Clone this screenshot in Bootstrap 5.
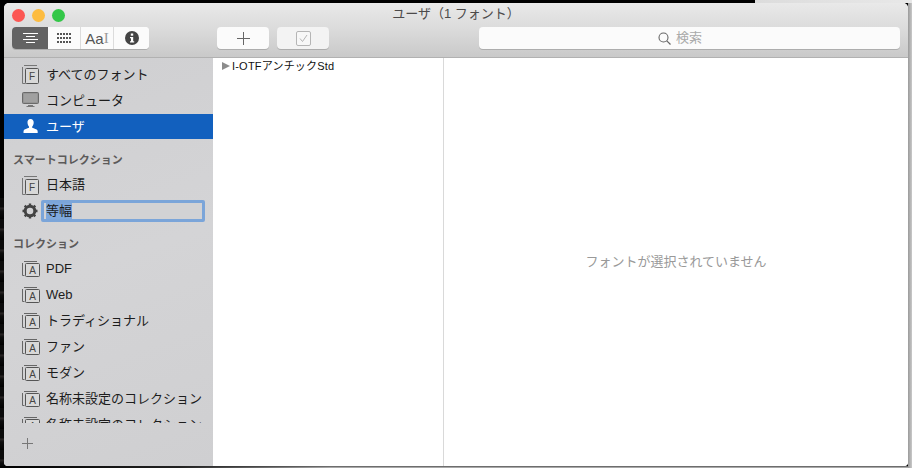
<!DOCTYPE html>
<html lang="ja">
<head>
<meta charset="utf-8">
<title>Font Book</title>
<link href="https://cdn.jsdelivr.net/npm/bootstrap@5.3.0/dist/css/bootstrap.min.css" rel="stylesheet">
<style>
html,body{height:100%;overflow:hidden;background:#000;}
body{font-family:"Liberation Sans","Noto Sans CJK JP",sans-serif;font-size:13px;color:#222;}
.desk{height:468px;padding:3px 4px 2px 4px;
 background:
  linear-gradient(90deg,#000 0,#000 755px,#dcdcdc 755px,#e8e8e8 100%) top/100% 3px no-repeat,
  linear-gradient(90deg,#9a9a9a,#c9c9c9) right/4px 100% no-repeat,
  linear-gradient(90deg,#000 0,#222 180px,rgba(0,0,0,0) 330px) bottom/100% 2px no-repeat,
  linear-gradient(180deg,#6d6d6d 0,#6d6d6d 1px,#a8a8a8 1px,#a8a8a8 100%) bottom/100% 2px no-repeat,
  repeating-linear-gradient(180deg,#0a0a0a 0,#0a0a0a 9px,#2a2626 10px,#0c0c0c 13px,#000 21px) left bottom/4px 270px no-repeat,
  #000;}
.win{height:100%;border-radius:5px 5px 4px 4px;overflow:hidden;background:#fff;}
.tbar{height:55px;flex:none;background:linear-gradient(180deg,#e9e9e9 0,#dcdcdc 45%,#c9c9c9 100%);border-bottom:1px solid #b1b1b1;}
.tit-row{height:24px;}
.lights{width:80px;padding-left:8px;gap:7px;}
.dot{width:13px;height:13px;border-radius:50%;display:block;}
.dot-r{background:#fc5753;}
.dot-y{background:#fdbc40;}
.dot-g{background:#33c748;}
.tit{font-size:13px;color:#4c4a4a;line-height:24px;padding-bottom:2px;}
.ctl-row{height:22px;padding:0 8px;}
.seg-box{width:137px;height:22px;border-radius:4px;background:#fbfbfb;box-shadow:0 1px 0 #adadad;overflow:hidden;}
.tb-btn.btn{padding:0;border:0;border-radius:0;height:22px;background:#fbfbfb;display:flex;align-items:center;justify-content:center;}
.seg1.btn{width:36px;background:#636363;}
.seg2.btn{width:32px;}
.seg3.btn{width:33px;border-left:1px solid #dcdcdc;font-family:"Liberation Sans",sans-serif;font-size:15px;font-weight:400;color:#555;line-height:1;}
.seg3 i{font-style:normal;font-weight:400;font-family:"Liberation Serif",serif;color:#999;font-size:15px;}
.seg4.btn{width:36px;border-left:1px solid #dcdcdc;}
.act.btn{width:52px;border-radius:4px;box-shadow:0 1px 0 #adadad;}
.act1{margin-left:68px;}
.act2{margin-left:8px;margin-right:150px;}
.act2.btn{background:#f3f3f3;}
.srch{height:22px;border-radius:4px;background:#fbfbfb;box-shadow:0 1px 0 #adadad;padding-right:19px;color:#aaa;font-size:13px;gap:5px;}
.side{width:209px;flex:none;background:linear-gradient(160deg,#cfcfd1,#d4d4d6 50%,#cfcfd1);}
.side-list{flex:1 1 auto;min-height:0;padding-top:3px;overflow:hidden;}
.rw{height:26px;flex:none;padding-left:18px;gap:6px;color:#1d1d1d;white-space:nowrap;line-height:26px;}
.rw svg{flex:none;}
.rw>span{padding-top:2px;}
.hd1~.rw>span{padding-top:0;}
.rw-sel{background:#1260be;color:#fff;height:25.5px;margin-top:.5px;}
.hd{flex:none;font-size:11px;font-weight:700;color:#5c5a5a;padding-left:9px;white-space:nowrap;}
.hd1{height:33px;line-height:42px;}
.hd2{height:32px;line-height:40px;}
.fld{margin-left:-3px;width:164px;height:22px;border:3px solid #7ba5d9;border-radius:2px;background:#d2d2d4;padding-left:2px;line-height:15px;}
.fld span{display:block;background:#7fa8dc;color:#1b1b1b;height:16px;padding:0;line-height:16px;width:26px;}
.side-foot{height:43px;flex:none;padding-left:18px;padding-bottom:3px;}
.list-pane{width:231px;flex:none;border-right:1px solid #d9d9d9;background:#fff;padding:0 0 0 9px;font-size:11px;letter-spacing:.2px;color:#111;}
.fam{height:16px;line-height:16px;gap:2px;}
.tri{width:0;height:0;border-left:8px solid #8c8c8c;border-top:4.5px solid transparent;border-bottom:4.5px solid transparent;}
.det{background:#fff;color:#999;font-size:13px;}
</style>
</head>
<body class="m-0">
<svg width="0" height="0" class="position-absolute">
<defs>
<g id="ic-stack"><path d="M2 .5h13M.5 2v16.5h3" fill="none" stroke="#777"/><rect x="3.5" y="3.5" width="13" height="15" rx="1" fill="#d8d8d8" stroke="#555"/></g>
<g id="ic-stack2"><path d="M2 .5h13M.5 2v12.5h2" fill="none" stroke="#666"/><rect x="3.5" y="2.5" width="14" height="13" rx="1" fill="#d8d8d8" stroke="#555"/></g>
</defs>
</svg>
<div class="desk">
<div class="win d-flex flex-column">
 <header class="tbar">
  <div class="tit-row d-flex align-items-center">
   <div class="lights d-flex align-items-center"><span class="dot dot-r"></span><span class="dot dot-y"></span><span class="dot dot-g"></span></div>
   <div class="tit flex-grow-1 text-center">ユーザ（1 フォント）</div>
   <div class="lights"></div>
  </div>
  <div class="ctl-row d-flex align-items-stretch">
   <div class="seg-box d-flex flex-none">
    <button class="btn tb-btn seg1" type="button" aria-label="list"><svg width="15" height="10" viewBox="0 0 15 10"><path d="M0 .5h15M3 3.500h9M0 6.500h15M3 9.500h9" stroke="#fff" fill="none"/></svg></button>
    <button class="btn tb-btn seg2" type="button" aria-label="grid"><svg width="14" height="10" viewBox="0 0 14 10" fill="#555"><rect x="0" y="0" width="2" height="2"/><rect x="3" y="0" width="2" height="2"/><rect x="6" y="0" width="2" height="2"/><rect x="9" y="0" width="2" height="2"/><rect x="12" y="0" width="2" height="2"/><rect x="0" y="4" width="2" height="2"/><rect x="3" y="4" width="2" height="2"/><rect x="6" y="4" width="2" height="2"/><rect x="9" y="4" width="2" height="2"/><rect x="12" y="4" width="2" height="2"/><rect x="0" y="8" width="2" height="2"/><rect x="3" y="8" width="2" height="2"/><rect x="6" y="8" width="2" height="2"/><rect x="9" y="8" width="2" height="2"/><rect x="12" y="8" width="2" height="2"/></svg></button>
    <button class="btn tb-btn seg3" type="button">Aa<i>I</i></button>
    <button class="btn tb-btn seg4" type="button" aria-label="info"><svg width="14" height="14" viewBox="0 0 14 14"><circle cx="7" cy="7" r="7" fill="#444"/><rect x="5.800" y="2.500" width="2.400" height="2.200" fill="#fff"/><path d="M5 6h3.200v4.200H9.200v1.300H5v-1.300h1V7.300H5z" fill="#fff"/></svg></button>
   </div>
   <button class="btn tb-btn act act1" type="button" aria-label="add"><svg width="13" height="13" viewBox="0 0 13 13"><path d="M6.500 0v13M0 6.500h13" stroke="#666" fill="none"/></svg></button>
   <button class="btn tb-btn act act2" type="button" aria-label="check"><svg width="15" height="15" viewBox="0 0 15 15"><rect x=".5" y=".5" width="14" height="14" rx="1.500" fill="#f7f7f7" stroke="#b5b5b5"/><path d="M4 7.500l2.500 3L11 4" stroke="#b5b5b5" fill="none"/></svg></button>
   <div class="srch flex-grow-1 d-flex align-items-center justify-content-center"><svg width="13" height="13" viewBox="0 0 13 13"><circle cx="5.500" cy="5.500" r="4.500" fill="none" stroke="#666" stroke-width="1.100"/><path d="M8.800 8.800l3.700 3.700" stroke="#666" stroke-width="1.200"/></svg><span>検索</span></div>
  </div>
 </header>
 <div class="d-flex flex-grow-1" style="min-height:0">
  <aside class="side d-flex flex-column">
   <div class="side-list d-flex flex-column">
    <div class="rw d-flex align-items-center"><svg width="18" height="19" viewBox="0 0 18 19"><use href="#ic-stack"/><text x="10" y="15" font-size="10" text-anchor="middle" fill="#444" font-family="Liberation Sans">F</text></svg><span>すべてのフォント</span></div>
    <div class="rw d-flex align-items-center"><svg width="18" height="16" viewBox="0 0 18 16"><rect x=".5" y=".5" width="16" height="11" rx="1" fill="#8a8a8a" stroke="#6a6a6a"/><rect x="1.500" y="1.500" width="14" height="9" fill="#a0a0a0"/><path d="M6 13.500h5M4.500 14.500h8" stroke="#777"/></svg><span>コンピュータ</span></div>
    <div class="rw rw-sel d-flex align-items-center"><svg width="18" height="14" viewBox="0 0 18 14"><path d="M8.500 0c2.300 0 3.300 1.800 3.200 3.700-.1 1.600-.8 3.100-1.500 3.800v1.300c1.700.8 4.800 1.300 5.300 2.700.2.600.2 1.500.2 2.500H1.500c0-1 0-1.900.2-2.500.5-1.400 3.600-1.900 5.300-2.700V7.500c-.7-.7-1.400-2.200-1.500-3.800C5.400 1.800 6.200 0 8.500 0z" fill="#fff"/></svg><span>ユーザ</span></div>
    <div class="hd hd1">スマートコレクション</div>
    <div class="rw d-flex align-items-center"><svg width="18" height="19" viewBox="0 0 18 19"><use href="#ic-stack"/><text x="10" y="15" font-size="10" text-anchor="middle" fill="#444" font-family="Liberation Sans">F</text></svg><span>日本語</span></div>
    <div class="rw d-flex align-items-center"><svg width="16" height="16" viewBox="0 0 16 16"><circle cx="8" cy="8" r="4.800" fill="none" stroke="#444" stroke-width="3"/><path d="M8 .5v3M8 12.500v3M.5 8h3M12.500 8h3M2.700 2.700l2.100 2.100M11.200 11.200l2.100 2.100M2.700 13.300l2.100-2.100M11.200 4.800l2.100-2.100" stroke="#444" stroke-width="2.400"/></svg><div class="fld"><span>等幅</span></div></div>
    <div class="hd hd2">コレクション</div>
    <div class="rw d-flex align-items-center"><svg width="18" height="16" viewBox="0 0 18 16"><use href="#ic-stack2"/><text x="10.500" y="13" font-size="10" text-anchor="middle" fill="#444" font-family="Liberation Sans">A</text></svg><span>PDF</span></div>
    <div class="rw d-flex align-items-center"><svg width="18" height="16" viewBox="0 0 18 16"><use href="#ic-stack2"/><text x="10.500" y="13" font-size="10" text-anchor="middle" fill="#444" font-family="Liberation Sans">A</text></svg><span>Web</span></div>
    <div class="rw d-flex align-items-center"><svg width="18" height="16" viewBox="0 0 18 16"><use href="#ic-stack2"/><text x="10.500" y="13" font-size="10" text-anchor="middle" fill="#444" font-family="Liberation Sans">A</text></svg><span>トラディショナル</span></div>
    <div class="rw d-flex align-items-center"><svg width="18" height="16" viewBox="0 0 18 16"><use href="#ic-stack2"/><text x="10.500" y="13" font-size="10" text-anchor="middle" fill="#444" font-family="Liberation Sans">A</text></svg><span>ファン</span></div>
    <div class="rw d-flex align-items-center"><svg width="18" height="16" viewBox="0 0 18 16"><use href="#ic-stack2"/><text x="10.500" y="13" font-size="10" text-anchor="middle" fill="#444" font-family="Liberation Sans">A</text></svg><span>モダン</span></div>
    <div class="rw d-flex align-items-center"><svg width="18" height="16" viewBox="0 0 18 16"><use href="#ic-stack2"/><text x="10.500" y="13" font-size="10" text-anchor="middle" fill="#444" font-family="Liberation Sans">A</text></svg><span>名称未設定のコレクション</span></div>
    <div class="rw d-flex align-items-center"><svg width="18" height="16" viewBox="0 0 18 16"><use href="#ic-stack2"/><text x="10.500" y="13" font-size="10" text-anchor="middle" fill="#444" font-family="Liberation Sans">A</text></svg><span>名称未設定のコレクション</span></div>
   </div>
   <div class="side-foot d-flex align-items-center"><svg width="11" height="11" viewBox="0 0 11 11"><path d="M5.500 0v11M0 5.500h11" stroke="#777" fill="none"/></svg></div>
  </aside>
  <div class="list-pane">
   <div class="fam d-flex align-items-center"><span class="tri"></span><span>I-OTFアンチックStd</span></div>
  </div>
  <div class="det flex-grow-1 d-flex align-items-center justify-content-center">フォントが選択されていません</div>
 </div>
</div>
</div>
<script src="https://cdn.jsdelivr.net/npm/bootstrap@5.3.0/dist/js/bootstrap.bundle.min.js"></script>
</body>
</html>
